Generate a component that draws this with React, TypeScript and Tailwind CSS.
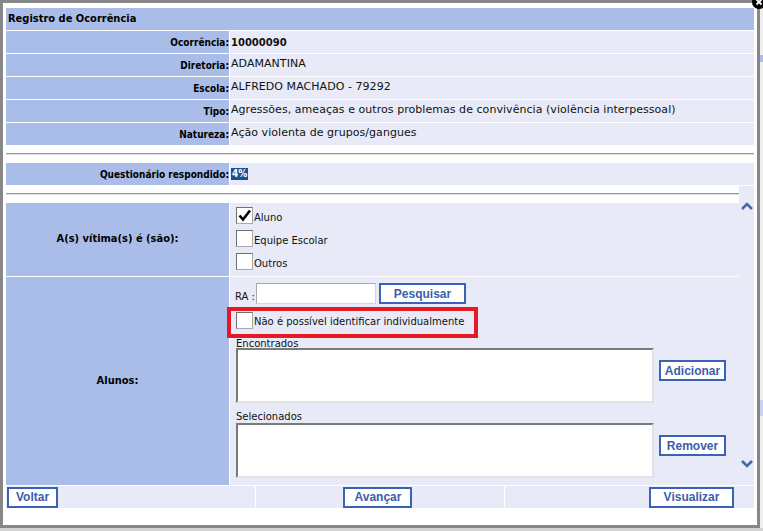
import type { ReactNode } from 'react';

const LABEL_BG = 'bg-[#a9bde8]';
const CELL_BG = 'bg-[#e8ebf7]';
const LABEL_FONT = "font-['DejaVu_Sans_Condensed','DejaVu_Sans',sans-serif] font-bold text-black";
const SMALL_FONT = "font-['DejaVu_Sans',sans-serif] text-[10px] text-[#111]";

const INFO = [
  { label: 'Ocorrência:', value: '10000090', strong: true },
  { label: 'Diretoria:', value: 'ADAMANTINA' },
  { label: 'Escola:', value: 'ALFREDO MACHADO - 79292' },
  { label: 'Tipo:', value: 'Agressões, ameaças e outros problemas de convivência (violência interpessoal)' },
  { label: 'Natureza:', value: 'Ação violenta de grupos/gangues' },
] as const;

const VICTIMS = [
  { label: 'Aluno', checked: true },
  { label: 'Equipe Escolar', checked: false },
  { label: 'Outros', checked: false },
];

const btn =
  "h-[21px] border-2 border-[#3a62b6] bg-white flex items-center justify-center " +
  "font-['Liberation_Sans',Arial,sans-serif] font-bold text-[12px] text-[#3a5eac] leading-none";

function Checkbox({ checked = false }: { checked?: boolean }) {
  return (
    <span className="w-[17px] h-[17px] shrink-0 bg-white border border-[#6f6f6f] border-r-[#a9a9a9] border-b-[#a9a9a9] flex items-center justify-center">
      {checked && (
        <svg width="15" height="15" viewBox="0 0 15 15">
          <polyline points="2.5,7.5 6,11.5 13,2.5" fill="none" stroke="#000" strokeWidth="2.6" strokeLinejoin="miter" />
        </svg>
      )}
    </span>
  );
}

function Rule() {
  return <div className="h-[2px] border-t border-[#9a9a9a] border-b border-b-[#dedede]" />;
}

function ListBox() {
  return <div className="w-[418px] h-[55px] bg-white border-2 border-[#7a7a7a] border-r-[#e2e2e2] border-b-[#e2e2e2]" />;
}

function Button({ w, children }: { w: string; children: ReactNode }) {
  return (
    <button type="button" className={`${btn} ${w}`}>
      {children}
    </button>
  );
}

function Chevron({ up }: { up?: boolean }) {
  return (
    <svg width="12" height="8" viewBox="0 0 12 8" className="mx-auto">
      <polyline
        points={up ? '1,7 6,2 11,7' : '1,1 6,6 11,1'}
        fill="none"
        stroke="#4666a6"
        strokeWidth="2.6"
      />
    </svg>
  );
}

export default function App() {
  return (
    <div className="w-[763px] h-[531px] overflow-hidden bg-[#d3d3d3] flex flex-col">
      <div className="flex h-[528px] shrink-0">
        <div className="relative w-[760px] h-[528px] shrink-0 border-[3px] border-[#878787] bg-white pt-[5px] pl-[3px] pr-[3px]">
          {/* close badge */}
          <span className="absolute top-[-8px] right-[-9px] w-[14px] h-[14px] rounded-full bg-black flex items-center justify-center">
            <svg width="8" height="8" viewBox="0 0 8 8">
              <path d="M1.5 1.5 L6.5 6.5 M6.5 1.5 L1.5 6.5" stroke="#fff" strokeWidth="1.8" />
            </svg>
          </span>

          <div className="flex flex-col gap-px">
            <div className={`h-[22px] ${LABEL_BG} flex items-center pl-[2px] text-[11px] ${LABEL_FONT}`}>
              Registro de Ocorrência
            </div>
            {INFO.map((row) => (
              <div key={row.label} className="flex gap-px h-[22px]">
                <div className={`w-[223px] ${LABEL_BG} flex items-center justify-end text-[10px] ${LABEL_FONT}`}>
                  {row.label}
                </div>
                <div
                  className={`flex-1 ${CELL_BG} flex items-center pl-px font-['DejaVu_Sans',sans-serif] text-[#111] ${
                    'strong' in row ? 'font-bold text-[10px]' : 'text-[11px] pb-[2px] tracking-[0.05px]'
                  }`}
                >
                  {row.value}
                </div>
              </div>
            ))}
          </div>

          <div className="mt-[8px]">
            <Rule />
          </div>

          <div className="mt-[8px] flex gap-px h-[22px]">
            <div className={`w-[223px] ${LABEL_BG} flex items-center justify-end text-[10px] ${LABEL_FONT}`}>
              Questionário respondido:
            </div>
            <div className={`flex-1 ${CELL_BG} flex items-center pl-px`}>
              <span className="bg-[#1d4f91] text-white font-bold text-[10px] font-['DejaVu_Sans_Condensed','DejaVu_Sans',sans-serif] px-px leading-[12px]">
                4%
              </span>
            </div>
          </div>

          {/* scrolling part */}
          <div className="mt-px h-[299px] flex">
            <div className="flex-1 overflow-hidden pt-[7px]">
              <Rule />
              <div className="mt-[8px] flex flex-col gap-px">
                <div className="flex gap-px h-[73px]">
                  <div className={`w-[223px] ${LABEL_BG} flex items-center justify-center text-[11px] ${LABEL_FONT}`}>
                    A(s) vítima(s) é (são):
                  </div>
                  <div className={`flex-1 ${CELL_BG} pt-[4px] pl-[6px] flex flex-col gap-[6px]`}>
                    {VICTIMS.map((v) => (
                      <label key={v.label} className={`flex items-center gap-[1px] h-[17px] ${SMALL_FONT}`}>
                        <Checkbox checked={v.checked} />
                        <span className="pt-[3px]">{v.label}</span>
                      </label>
                    ))}
                  </div>
                </div>

                <div className="flex gap-px h-[260px]">
                  <div className={`w-[223px] ${LABEL_BG} flex justify-center pt-[96px] text-[11px] ${LABEL_FONT}`}>
                    Alunos:
                  </div>
                  <div className={`relative flex-1 ${CELL_BG} pt-[6px] pl-[5px] ${SMALL_FONT}`}>
                    <div className="flex items-center h-[21px]">
                      <span className="w-[21px] pt-[5px] whitespace-nowrap">RA :</span>
                      <div className="w-[120px] h-[21px] bg-white border border-[#a3a9b0] border-r-[#d5d5d5] border-b-[#d5d5d5]" />
                      <div className="ml-[3px]">
                        <Button w="w-[87px]">Pesquisar</Button>
                      </div>
                    </div>

                    <div className="mt-[8px] ml-px flex items-center gap-[1px] h-[17px]">
                      <Checkbox />
                      <span className="pt-[2px]">Não é possível identificar individualmente</span>
                    </div>
                    {/* highlight annotation */}
                    <div className="absolute left-[-3px] top-[30px] w-[251px] h-[31px] border-4 border-[#e41b24]" />

                    <div className="mt-[5px] ml-px h-[14px] leading-[19px]">Encontrados</div>
                    <div className="ml-px flex items-start gap-[5px]">
                      <ListBox />
                      <div className="mt-[12px]">
                        <Button w="w-[67px]">Adicionar</Button>
                      </div>
                    </div>

                    <div className="mt-[7px] ml-px h-[13px] leading-[14px]">Selecionados</div>
                    <div className="ml-px flex items-start gap-[5px]">
                      <ListBox />
                      <div className="mt-[12px]">
                        <Button w="w-[67px]">Remover</Button>
                      </div>
                    </div>
                  </div>
                </div>
              </div>
            </div>
            <div className={`w-[15px] ${CELL_BG} flex flex-col justify-between pt-[16px] pb-[17px]`}>
              <Chevron up />
              <Chevron />
            </div>
          </div>

          {/* footer buttons */}
          <div className="mt-px grid grid-cols-3 gap-px h-[22px]">
            <div className={`${CELL_BG} flex items-center pl-px`}>
              <Button w="w-[51px]">Voltar</Button>
            </div>
            <div className={`${CELL_BG} flex items-center justify-center pr-[4px]`}>
              <Button w="w-[69px]">Avançar</Button>
            </div>
            <div className={`${CELL_BG} flex items-center justify-end pr-[20px]`}>
              <Button w="w-[85px]">Visualizar</Button>
            </div>
          </div>
        </div>

        {/* page behind the dialog */}
        <div className="flex-1 bg-[#efefef] flex flex-col">
          <div className="mt-[55px] h-[7px] bg-[#a9bde8]" />
          <div className="mt-[338px] h-[16px] bg-[#c9d3ee]" />
        </div>
      </div>
    </div>
  );
}
